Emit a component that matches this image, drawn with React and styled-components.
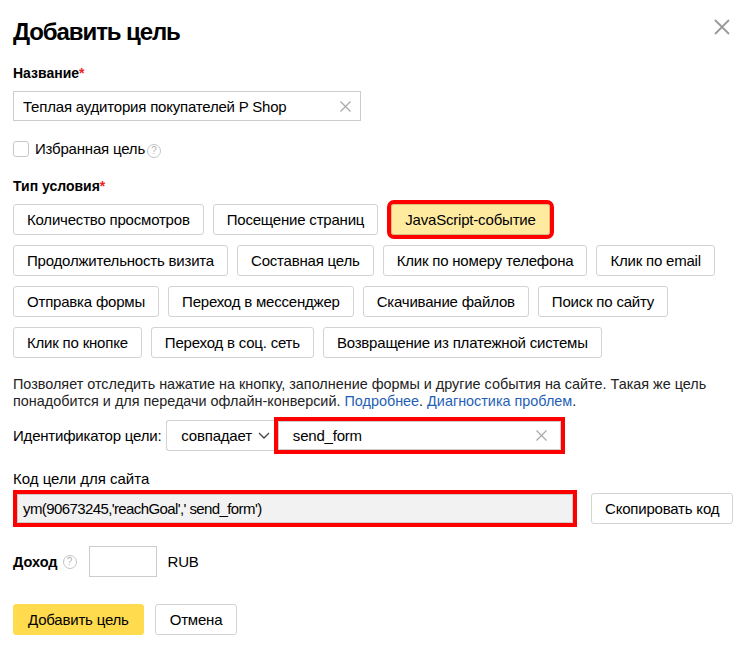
import React from "react";
import styled, { createGlobalStyle } from "styled-components";

const GlobalStyle = createGlobalStyle`
    body {
        margin: 0;
        background: #fff;
        font-family: "Liberation Sans", Arial, sans-serif;
        color: #000;
    }
`

const Page = styled.div`
    width: 748px;
    padding: 0 13px;
    box-sizing: border-box;
    letter-spacing: -0.2px;
`

const Header = styled.div`
    display: flex;
    justify-content: space-between;
    align-items: flex-start;
    padding-top: 18px;
    padding-right: 4px;
`

const Title = styled.h1`
    margin: 0;
    font-size: 24px;
    line-height: 28px;
    font-weight: 700;
    letter-spacing: -1.1px;
`

const CloseBtn = styled.div`
    width: 18px;
    height: 18px;
    color: #9a9a9a;
`

const Label = styled.div`
    font-size: ${({ $plain }) => ($plain ? 15 : 14)}px;
    font-weight: ${({ $plain }) => ($plain ? 400 : 700)};
    line-height: 16px;
    margin-top: ${({ $top }) => $top}px;
    letter-spacing: 0;
    span { color: #e22; }
`

const TextInput = styled.div`
    margin-top: 10px;
    width: 348px;
    height: 30px;
    box-sizing: border-box;
    border: 1px solid #ccc;
    display: flex;
    align-items: center;
    justify-content: space-between;
    padding: 0 9px 0 9px;
    font-size: 15px;
`

const Clear = styled.svg`
    width: 11px;
    height: 11px;
    color: #a8a8a8;
`

const CheckRow = styled.div`
    margin-top: 19px;
    display: flex;
    align-items: center;
    gap: 6px;
    font-size: 15px;
`

const Checkbox = styled.div`
    width: 14px;
    height: 14px;
    border: 1px solid #c8c8c8;
    border-radius: 3px;
`

const Help = styled.span`
    display: inline-flex;
    align-items: center;
    justify-content: center;
    width: 12px;
    height: 12px;
    border: 1px solid #c4c4c4;
    border-radius: 50%;
    color: #b4b4b4;
    font-size: 10px;
    font-weight: 400;
    line-height: 1;
    letter-spacing: 0;
    margin-left: ${({ $left }) => $left || 2}px;
`

const Rows = styled.div`
    margin-top: 10px;
    display: flex;
    flex-direction: column;
    gap: 10px;
`

const Row = styled.div`
    display: flex;
    gap: 9px;
`

const Chip = styled.div`
    height: 31px;
    box-sizing: border-box;
    padding: 0 13px;
    display: flex;
    align-items: center;
    border: 1px solid ${({ $active }) => ($active ? "#d6c17a" : "#d3d3d3")};
    border-radius: 3px;
    background: ${({ $active }) => ($active ? "#ffeba0" : "#fff")};
    font-size: 15px;
    white-space: nowrap;
    outline: ${({ $active }) => ($active ? "4px solid #f00" : "none")};
    margin: ${({ $active }) => ($active ? "0 4px" : "0")};
`

const Desc = styled.p`
    margin: 18px 0 0;
    font-size: 14.4px;
    line-height: 17px;
    letter-spacing: 0;
    color: #222;
    a { color: #1f5fb5; text-decoration: none; }
`

const IdRow = styled.div`
    margin-top: 7px;
    display: flex;
    align-items: center;
    font-size: 15px;
`

const IdLabel = styled.span`
    margin-right: 5px;
`

const Select = styled.div`
    height: 31px;
    box-sizing: border-box;
    border: 1px solid #d3d3d3;
    border-right: none;
    border-radius: 3px 0 0 3px;
    display: flex;
    align-items: center;
    gap: 6px;
    padding: 0 4px 0 14px;
`

const Marked = styled.div`
    border: 4px solid #f00;
    display: flex;
    flex-shrink: 0;
`

const IdInput = styled.div`
    width: 283px;
    height: 29px;
    box-sizing: border-box;
    border: 1px solid #ccc;
    display: flex;
    align-items: center;
    justify-content: space-between;
    padding: 0 13px 0 14px;
`

const CodeRow = styled.div`
    margin-top: 3px;
    display: flex;
    align-items: center;
    gap: 14px;
`

const CodeField = styled.div`
    width: 556px;
    height: 29px;
    box-sizing: border-box;
    background: #f2f2f2;
    border: 1px solid #ccc;
    display: flex;
    align-items: center;
    padding: 0 5px;
    font-size: 15px;
    letter-spacing: -0.6px;
`

const Button = styled.div`
    height: 31px;
    box-sizing: border-box;
    padding: 0 ${({ $pad }) => $pad || 13}px;
    display: inline-flex;
    align-items: center;
    flex-shrink: 0;
    white-space: nowrap;
    border-radius: 3px;
    font-size: 15px;
    border: 1px solid ${({ $primary }) => ($primary ? "#ffdb4d" : "#d3d3d3")};
    background: ${({ $primary }) => ($primary ? "#ffdb4d" : "#fff")};
`

const IncomeRow = styled.div`
    margin-top: 19px;
    display: flex;
    align-items: center;
    font-size: 15px;
`

const Strong = styled.span`
    font-weight: 700;
    font-size: 14.5px;
    letter-spacing: 0;
`

const SmallInput = styled.div`
    width: 68px;
    height: 31px;
    box-sizing: border-box;
    border: 1px solid #ccc;
    margin: 0 11px 0 12px;
`

const Footer = styled.div`
    margin-top: 27px;
    display: flex;
    gap: 11px;
`

const Cross = () => (
    <Clear viewBox="0 0 11 11">
        <path d="M0.5 0.5L10.5 10.5M10.5 0.5L0.5 10.5" stroke="currentColor" strokeWidth="1.2" fill="none" />
    </Clear>
)

const rows = [
    ["Количество просмотров", "Посещение страниц", "JavaScript-событие"],
    ["Продолжительность визита", "Составная цель", "Клик по номеру телефона", "Клик по email"],
    ["Отправка формы", "Переход в мессенджер", "Скачивание файлов", "Поиск по сайту"],
    ["Клик по кнопке", "Переход в соц. сеть", "Возвращение из платежной системы"],
]

const App = () => {
    return (
        <>
            <GlobalStyle />
            <Page>
                <Header>
                    <Title>Добавить цель</Title>
                    <CloseBtn>
                        <svg viewBox="0 0 18 18" width="18" height="18">
                            <path d="M2 2L16 16M16 2L2 16" stroke="currentColor" strokeWidth="1.8" fill="none" />
                        </svg>
                    </CloseBtn>
                </Header>

                <Label $top={19}>Название<span>*</span></Label>
                <TextInput>
                    Теплая аудитория покупателей P Shop
                    <Cross />
                </TextInput>

                <CheckRow>
                    <Checkbox />
                    <span>Избранная цель<Help>?</Help></span>
                </CheckRow>

                <Label $top={20}>Тип условия<span>*</span></Label>
                <Rows>
                    {rows.map((r, i) => (
                        <Row key={i}>
                            {r.map((t) => (
                                <Chip key={t} $active={t === "JavaScript-событие"}>{t}</Chip>
                            ))}
                        </Row>
                    ))}
                </Rows>

                <Desc>
                    Позволяет отследить нажатие на кнопку, заполнение формы и другие события на сайте. Такая же цель<br />
                    понадобится и для передачи офлайн-конверсий. <a href="#">Подробнее</a>. <a href="#">Диагностика проблем</a>.
                </Desc>

                <IdRow>
                    <IdLabel>Идентификатор цели:</IdLabel>
                    <Select>
                        совпадает
                        <svg viewBox="0 0 12 8" width="12" height="8">
                            <path d="M1 1L6 6L11 1" stroke="#444" strokeWidth="1.3" fill="none" />
                        </svg>
                    </Select>
                    <Marked>
                        <IdInput>
                            send_form
                            <Cross />
                        </IdInput>
                    </Marked>
                </IdRow>

                <Label $plain $top={17}>Код цели для сайта</Label>
                <CodeRow>
                    <Marked>
                        <CodeField>ym(90673245,'reachGoal',' send_form')</CodeField>
                    </Marked>
                    <Button>Скопировать код</Button>
                </CodeRow>

                <IncomeRow>
                    <Strong>Доход</Strong>
                    <Help $left={5}>?</Help>
                    <SmallInput />
                    RUB
                </IncomeRow>

                <Footer>
                    <Button $primary $pad={14}>Добавить цель</Button>
                    <Button $pad={14}>Отмена</Button>
                </Footer>
            </Page>
        </>
    );
}

export default App;
